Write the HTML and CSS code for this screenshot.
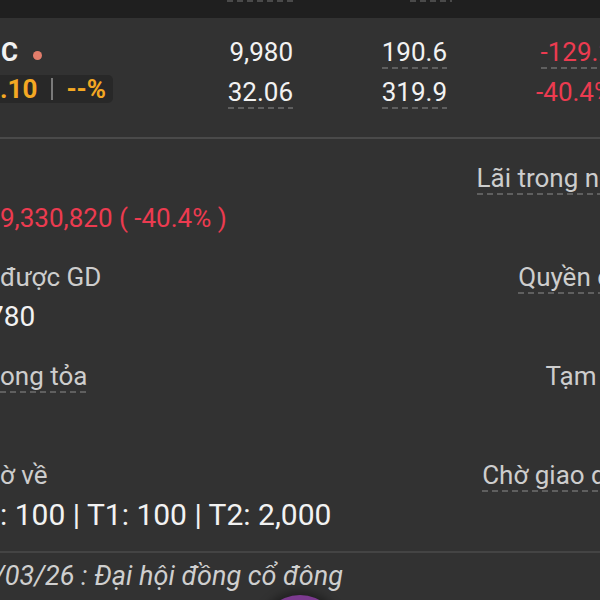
FILE: index.html
```html
<!DOCTYPE html>
<html lang="vi">
<head>
    <meta charset="UTF-8">
    <meta name="viewport" content="width=device-width, initial-scale=1.0">
    <title>Chi tiết mã</title>
    <link rel="stylesheet" href="styles.css">
</head>
<body>
    <div class="screen">
        <div class="head">
            <span></span>
            <span class="head-line"></span>
            <span class="head-line short"></span>
            <span></span>
        </div>

        <section class="quote">
            <div class="quote-row">
                <div class="name">
                    <span class="ticker">C</span>
                    <span class="dot"></span>
                </div>
                <div class="num"><span>9,980</span></div>
                <div class="num"><span class="dashed">190.6</span></div>
                <div class="num red"><span class="dashed">-129.2</span></div>
            </div>
            <div class="quote-row">
                <div class="name">
                    <span class="chip"><b>.10</b><i class="bar"></i><b>--%</b></span>
                </div>
                <div class="num"><span class="dashed">32.06</span></div>
                <div class="num"><span class="dashed">319.9</span></div>
                <div class="num red"><span>-40.4%</span></div>
            </div>
        </section>

        <section class="details">
            <div class="field">
                <div class="field-top">
                    <span class="label"></span>
                    <span class="label dashed">Lãi trong ngày</span>
                </div>
                <div class="value red small">9,330,820 ( -40.4% )</div>
            </div>
            <div class="field">
                <div class="field-top">
                    <span class="label">được GD</span>
                    <span class="label dashed">Quyền chờ</span>
                </div>
                <div class="value mid cut">780</div>
            </div>
            <div class="field">
                <div class="field-top">
                    <span class="label"><span class="dashed">ong tỏa</span></span>
                    <span class="label">Tạm giữ</span>
                </div>
                <div class="value"></div>
            </div>
            <div class="field">
                <div class="field-top">
                    <span class="label">ờ về</span>
                    <span class="label dashed">Chờ giao dịch</span>
                </div>
                <div class="value">: 100 | T1: 100 | T2: 2,000</div>
            </div>
        </section>

        <div class="event">/03/26 : Đại hội đồng cổ đông</div>
    </div>

    <span class="fab"></span>
</body>
</html>
```

FILE: styles.css
```css
html, body {
    margin: 0;
    width: 600px;
    height: 600px;
    overflow: hidden;
}
body {
    background: #323232;
    font-family: Roboto, "Noto Sans", sans-serif;
    color: #f2f2f2;
    position: relative;
}
.screen {
    width: 640px;
}
.dashed {
    padding-bottom: 2px;
    background: repeating-linear-gradient(90deg, #5f5f5f 0 6px, transparent 6px 10px) left bottom / 100% 2px no-repeat;
}
.red {
    color: #ec3b50;
}

/* header strip */
.head {
    height: 18px;
    background: #1f1f1f;
    display: grid;
    grid-template-columns: 180px 117px 155px 1fr;
}
.head-line {
    justify-self: end;
    width: 70px;
    height: 2px;
    background: repeating-linear-gradient(90deg, #4a4a4a 0 6px, transparent 6px 10px);
}
.head-line.short {
    width: 42px;
}

/* quote table */
.quote {
    padding: 19px 0 28px;
    border-bottom: 2px solid #4a4a4a;
    display: flex;
    flex-direction: column;
    gap: 8px;
}
.quote-row {
    display: grid;
    grid-template-columns: 180px 113px 154px 166px;
    font-size: 26px;
    line-height: 30px;
    height: 32px;
}
.name {
    display: flex;
    align-items: flex-start;
}
.ticker {
    font-weight: 700;
    padding-left: 1px;
}
.dot {
    width: 9px;
    height: 9px;
    border-radius: 50%;
    background: #e27d6b;
    margin: 14px 0 0 15px;
}
.chip {
    display: inline-flex;
    align-items: center;
    height: 28px;
    margin-top: -2px;
    padding-right: 7px;
    background: #282828;
    border-radius: 0 5px 5px 0;
    color: #f4a823;
}
.chip b {
    font-weight: 700;
}
.bar {
    width: 2px;
    height: 22px;
    margin: 0 13px 0 14px;
    background: #7a7a7a;
}
.num {
    justify-self: end;
}
.num span {
    display: inline-block;
}

/* detail fields */
.details {
    padding-top: 24px;
}
.field {
    height: 71px;
    margin-bottom: 28px;
}
.field:last-child {
    margin-bottom: 20px;
}
.field-top {
    display: flex;
    justify-content: space-between;
    font-size: 26px;
    line-height: 30px;
    height: 32px;
    color: #cdcdcd;
}
.label {
    white-space: nowrap;
}
.label.dashed {
    display: inline-block;
}
.value {
    margin-top: 7px;
    font-size: 30px;
    line-height: 32px;
    height: 32px;
    white-space: nowrap;
}
.value.small {
    font-size: 26px;
}
.value.mid {
    font-size: 28px;
}
.value.cut {
    margin-left: -12px;
}

/* event line */
.event {
    border-top: 2px solid #444;
    padding-top: 7px;
    text-indent: -6px;
    font-size: 27px;
    line-height: 32px;
    font-style: italic;
    color: #cfcfcf;
}

/* floating button peeking from the bottom */
.fab {
    position: absolute;
    left: 260px;
    top: 595px;
    width: 80px;
    height: 80px;
    border-radius: 50%;
    background: #7c3a90;
    box-shadow: 0 0 8px 4px rgba(0, 0, 0, 0.35);
}
```
